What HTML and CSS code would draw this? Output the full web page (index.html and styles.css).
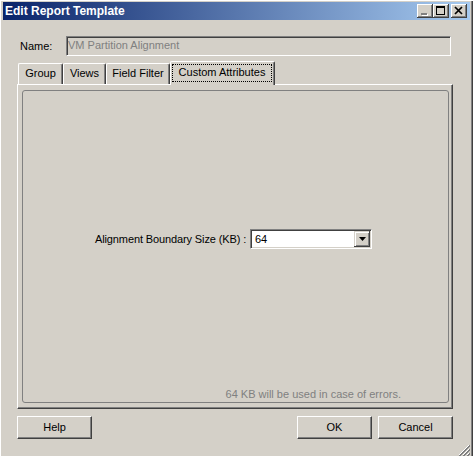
FILE: index.html
```html
<!DOCTYPE html>
<html lang="en">
  <head>
    <meta charset="UTF-8" />
    <title>Edit Report Template</title>
    <link rel="stylesheet" href="styles.css">
  </head>
  <body>
    <div class="window">
      <!-- Title bar -->
      <div class="titlebar">
        <span class="title">Edit Report Template</span>
        <div class="title-buttons">
          <div class="tbtn">
            <svg width="16" height="14" viewBox="0 0 16 14">
              <rect x="5" y="10" width="6" height="2" fill="#fff" />
              <rect x="4" y="9" width="6" height="2" fill="#808080" />
            </svg>
          </div>
          <div class="tbtn">
            <svg width="16" height="14" viewBox="0 0 16 14">
              <rect x="3" y="2" width="9" height="2" fill="#000" />
              <rect x="3.5" y="2.5" width="8" height="8" fill="none" stroke="#000" />
            </svg>
          </div>
          <div class="tbtn close">
            <svg width="16" height="14" viewBox="0 0 16 14">
              <path d="M4 3 L11 10 M11 3 L4 10" stroke="#000" stroke-width="1.7" fill="none" />
            </svg>
          </div>
        </div>
      </div>

      <div class="content">
        <!-- Name -->
        <div class="name-row">
          <span class="name-label">Name:</span>
          <div class="name-input">VM Partition Alignment</div>
        </div>

        <!-- Tabs -->
        <div class="tabs">
          <div class="tab tab-group">Group</div>
          <div class="tab tab-views">Views</div>
          <div class="tab tab-filter">Field Filter</div>
          <div class="tab tab-custom selected"><span class="focus">Custom Attributes</span></div>
        </div>

        <div class="panel">
          <div class="frame">
            <div class="field-row">
              <span class="field-label">Alignment Boundary Size (KB) :</span>
              <div class="combo">
                <span class="combo-value">64</span>
                <div class="combo-btn">
                  <svg width="7" height="4" viewBox="0 0 7 4">
                    <polygon points="0,0 7,0 3.5,4" fill="#000" />
                  </svg>
                </div>
              </div>
            </div>
            <div class="note">64 KB will be used in case of errors.</div>
          </div>
        </div>

        <!-- Buttons -->
        <div class="buttons">
          <div class="btn">Help</div>
          <div class="spacer"></div>
          <div class="btn">OK</div>
          <div class="btn">Cancel</div>
        </div>
      </div>

      <svg class="grip" width="12" height="12" viewBox="0 0 12 12">
        <path d="M11 1 L1 11 M11 5 L5 11 M11 9 L9 11" stroke="#fff" stroke-width="1" />
        <path d="M12 1 L1 12 M12 2 L2 12 M12 5 L5 12 M12 6 L6 12 M12 9 L9 12 M12 10 L10 12" stroke="#808080" stroke-width="1" />
      </svg>
    </div>
  </body>
</html>
```

FILE: styles.css
```css
body {
  margin: 0;
  background: #d4d0c8;
  font-family: "Liberation Sans", Arial, sans-serif;
  font-size: 11px;
  color: #000;
}

.window {
  position: relative;
  box-sizing: border-box;
  width: 473px;
  height: 456px;
  padding: 2px 3px 0 3px;
  background: #d4d0c8;
  box-shadow: inset 1px 1px #fff, inset -1px 0 #404040, inset -2px 0 #808080;
}

/* Заголовок окна */
.titlebar {
  display: flex;
  align-items: center;
  height: 18px;
  padding-left: 2px;
  background: linear-gradient(to right, #0a246a, #a6caf0);
  color: #fff;
  font-weight: bold;
  font-size: 12px;
}

.title {
  flex: 1;
}

.title-buttons {
  display: flex;
  align-self: flex-start;
  margin-top: 2px;
  margin-right: 3px;
}

.tbtn {
  width: 16px;
  height: 14px;
  background: #d4d0c8;
  box-shadow: inset -1px -1px #404040, inset 1px 1px #fff, inset -2px -2px #808080;
}

.tbtn svg {
  display: block;
}

.tbtn.close {
  margin-left: 2px;
}

.content {
  padding: 0 17px 0 14px;
}

/* Имя шаблона */
.name-row {
  display: flex;
  align-items: center;
  height: 20px;
  margin-top: 16px;
}

.name-label {
  box-sizing: border-box;
  flex: 0 0 49px;
  padding-left: 3px;
}

.name-input {
  box-sizing: border-box;
  flex: 1;
  height: 20px;
  margin-right: 2px;
  padding-left: 1px;
  line-height: 16px;
  color: #808080;
  border-top: 1px solid #808080;
  border-left: 1px solid #808080;
  border-right: 1px solid #fff;
  border-bottom: 1px solid #fff;
  box-shadow: inset 1px 1px #404040, inset -1px -1px #d4d0c8;
}

/* Вкладки */
.tabs {
  position: relative;
  z-index: 1;
  display: flex;
  align-items: flex-end;
  height: 23px;
  margin-top: 5px;
  padding-left: 1px;
}

.tab {
  box-sizing: border-box;
  height: 21px;
  line-height: 19px;
  text-align: center;
  border-top: 1px solid #fff;
  border-left: 1px solid #fff;
  border-right: 1px solid #404040;
  border-radius: 2px 2px 0 0;
  box-shadow: inset -1px 0 #808080;
}

.tab-group {
  width: 45px;
}

.tab-views {
  width: 43px;
}

.tab-filter {
  width: 64px;
}

.tab-custom {
  width: 105px;
}

.tab.selected {
  height: 24px;
  margin-bottom: -1px;
  background: #d4d0c8;
}

.focus {
  display: block;
  box-sizing: border-box;
  height: 18px;
  margin: 2px 2px 0 1px;
  line-height: 15px;
  border: 1px dotted #000;
}

.panel {
  box-sizing: border-box;
  display: flex;
  height: 325px;
  padding: 5px 3px 5px 4px;
  border-top: 1px solid #fff;
  border-left: 1px solid #fff;
  border-right: 1px solid #404040;
  border-bottom: 1px solid #404040;
  box-shadow: inset -1px -1px #808080;
}

.frame {
  flex: 1;
  display: flex;
  flex-direction: column;
  border: 1px solid #808080;
  border-radius: 3px;
}

.field-row {
  display: flex;
  align-items: center;
  margin-top: 138px;
  padding-left: 72px;
}

.field-label {
  width: 155px;
  letter-spacing: -0.12px;
}

/* Выпадающий список */
.combo {
  box-sizing: border-box;
  display: flex;
  align-items: center;
  width: 122px;
  height: 20px;
  background: #fff;
  border-top: 1px solid #808080;
  border-left: 1px solid #808080;
  border-right: 1px solid #fff;
  border-bottom: 1px solid #fff;
  box-shadow: inset 1px 1px #404040, inset -1px -1px #d4d0c8;
}

.combo-value {
  flex: 1;
  padding-left: 4px;
}

.combo-btn {
  display: flex;
  align-items: center;
  justify-content: center;
  width: 16px;
  height: 16px;
  margin-right: 1px;
  background: #d4d0c8;
  box-shadow: inset -1px -1px #404040, inset 1px 1px #d4d0c8, inset 2px 2px #fff, inset -2px -2px #808080;
}

.combo-btn svg {
  display: block;
}

.note {
  align-self: flex-end;
  margin-top: auto;
  margin-right: 47px;
  margin-bottom: 1px;
  line-height: 13px;
  color: #808080;
}

/* Кнопки */
.buttons {
  display: flex;
  gap: 6px;
  margin-top: 7px;
}

.spacer {
  flex: 1;
}

.btn {
  box-sizing: border-box;
  width: 75px;
  height: 23px;
  line-height: 20px;
  text-align: center;
  border-top: 1px solid #fff;
  border-left: 1px solid #fff;
  border-right: 1px solid #404040;
  border-bottom: 1px solid #404040;
  box-shadow: inset -1px -1px #808080;
}

.grip {
  position: absolute;
  right: 3px;
  bottom: 0;
}
```
